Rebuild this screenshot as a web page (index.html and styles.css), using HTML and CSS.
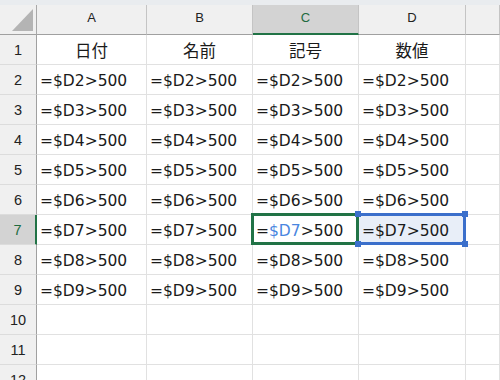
FILE: index.html
```html
<!DOCTYPE html>
<html lang="ja">
<head>
  <meta charset="UTF-8">
  <title>Sheet1</title>
  <link rel="stylesheet" href="styles.css">
</head>
<body>

<div class="strip"></div>

<div class="sheet">
  <div class="corner"><span class="corner-mark"></span></div>
  <div class="col-head">A</div>
  <div class="col-head">B</div>
  <div class="col-head active">C</div>
  <div class="col-head">D</div>
  <div class="col-head"></div>

  <div class="row-head">1</div>
  <div class="cell title">日付</div>
  <div class="cell title">名前</div>
  <div class="cell title">記号</div>
  <div class="cell title">数値</div>
  <div class="cell"></div>

  <div class="row-head">2</div>
  <div class="cell">=$D2&gt;500</div>
  <div class="cell">=$D2&gt;500</div>
  <div class="cell">=$D2&gt;500</div>
  <div class="cell">=$D2&gt;500</div>
  <div class="cell"></div>

  <div class="row-head">3</div>
  <div class="cell">=$D3&gt;500</div>
  <div class="cell">=$D3&gt;500</div>
  <div class="cell">=$D3&gt;500</div>
  <div class="cell">=$D3&gt;500</div>
  <div class="cell"></div>

  <div class="row-head">4</div>
  <div class="cell">=$D4&gt;500</div>
  <div class="cell">=$D4&gt;500</div>
  <div class="cell">=$D4&gt;500</div>
  <div class="cell">=$D4&gt;500</div>
  <div class="cell"></div>

  <div class="row-head">5</div>
  <div class="cell">=$D5&gt;500</div>
  <div class="cell">=$D5&gt;500</div>
  <div class="cell">=$D5&gt;500</div>
  <div class="cell">=$D5&gt;500</div>
  <div class="cell"></div>

  <div class="row-head">6</div>
  <div class="cell">=$D6&gt;500</div>
  <div class="cell">=$D6&gt;500</div>
  <div class="cell">=$D6&gt;500</div>
  <div class="cell">=$D6&gt;500</div>
  <div class="cell"></div>

  <div class="row-head active">7</div>
  <div class="cell">=$D7&gt;500</div>
  <div class="cell">=$D7&gt;500</div>
  <div class="cell editing">=<span class="ref">$D7</span>&gt;500<span class="active-box"></span></div>
  <div class="cell in-range">=$D7&gt;500
    <span class="range-box"></span>
    <span class="handle tl"></span>
    <span class="handle tr"></span>
    <span class="handle bl"></span>
    <span class="handle br"></span>
  </div>
  <div class="cell"></div>

  <div class="row-head">8</div>
  <div class="cell">=$D8&gt;500</div>
  <div class="cell">=$D8&gt;500</div>
  <div class="cell">=$D8&gt;500</div>
  <div class="cell">=$D8&gt;500</div>
  <div class="cell"></div>

  <div class="row-head">9</div>
  <div class="cell">=$D9&gt;500</div>
  <div class="cell">=$D9&gt;500</div>
  <div class="cell">=$D9&gt;500</div>
  <div class="cell">=$D9&gt;500</div>
  <div class="cell"></div>

  <div class="row-head">10</div>
  <div class="cell"></div>
  <div class="cell"></div>
  <div class="cell"></div>
  <div class="cell"></div>
  <div class="cell"></div>

  <div class="row-head">11</div>
  <div class="cell"></div>
  <div class="cell"></div>
  <div class="cell"></div>
  <div class="cell"></div>
  <div class="cell"></div>

  <div class="row-head">12</div>
  <div class="cell"></div>
  <div class="cell"></div>
  <div class="cell"></div>
  <div class="cell"></div>
  <div class="cell"></div>
</div>

</body>
</html>
```

FILE: styles.css
```css
* {
  box-sizing: border-box;
}

html, body {
  margin: 0;
  height: 100%;
  overflow: hidden;
  background: #ffffff;
}

.strip {
  height: 5px;
  background: #e9ecef;
}

.sheet {
  display: grid;
  grid-template-columns: 37px 110px 106px 106px 107px 1fr;
  grid-auto-rows: 30px;
  font-family: "DejaVu Sans", sans-serif;
}

.corner {
  position: relative;
  background: #f0f0f0;
  border-right: 1px solid #a8a8a8;
  border-bottom: 1px solid #a0a0a0;
}

.corner-mark {
  position: absolute;
  right: 3px;
  bottom: 3px;
  width: 21px;
  height: 22px;
  background: #b4b4b4;
  clip-path: polygon(100% 0, 100% 100%, 0 100%);
}

.col-head {
  background: #f0f0f0;
  border-right: 1px solid #c4c4c4;
  border-bottom: 1px solid #a0a0a0;
  color: #222222;
  font-family: "Liberation Sans", sans-serif;
  font-size: 13px;
  text-align: center;
  padding-top: 5px;
}

.col-head.active {
  background: #d3d3d3;
  color: #1e6b40;
  border-bottom: 2px solid #217346;
}

.row-head {
  display: flex;
  align-items: center;
  justify-content: center;
  background: #f0f0f0;
  border-right: 1px solid #a0a0a0;
  border-bottom: 1px solid #dcdcdc;
  color: #222222;
  font-family: "Liberation Sans", sans-serif;
  font-size: 14.5px;
  padding-top: 1px;
}

.row-head.active {
  background: #d3d3d3;
  color: #1e6b40;
  border-right: 2px solid #217346;
}

.cell {
  position: relative;
  display: flex;
  align-items: center;
  padding: 2px 0 0 3px;
  border-right: 1px solid #e1e1e1;
  border-bottom: 1px solid #e1e1e1;
  color: #1a1a1a;
  font-size: 15.5px;
  white-space: nowrap;
}

.cell.title {
  justify-content: center;
  padding: 0;
  font-family: "Noto Sans CJK JP", sans-serif;
  font-size: 16.5px;
}

.ref {
  color: #4a86e0;
}

.active-box {
  position: absolute;
  top: -2px;
  left: -2px;
  right: -1px;
  bottom: -1px;
  border: 3px solid #217346;
  z-index: 2;
}

.in-range {
  background: #e8eef8;
}

.range-box {
  position: absolute;
  top: -2px;
  left: -3px;
  right: -1px;
  bottom: -1px;
  border: 3px solid #3b6fcb;
  z-index: 1;
}

.handle {
  position: absolute;
  width: 6px;
  height: 6px;
  background: #3b6fcb;
  z-index: 3;
}

.handle.tl { left: -4px; top: -4px; }
.handle.tr { right: -3px; top: -4px; }
.handle.bl { left: -4px; bottom: -3px; }
.handle.br { right: -3px; bottom: -3px; }
```
